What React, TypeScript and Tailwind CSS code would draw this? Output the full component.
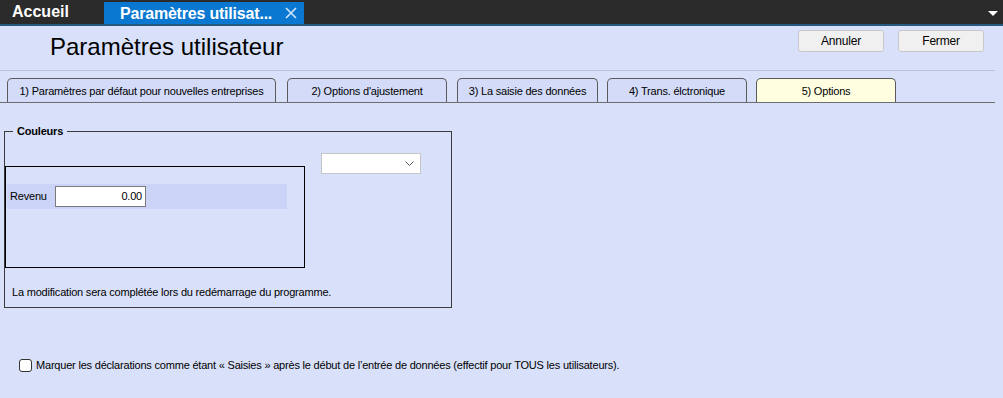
import React from "react";

const tabs = [
  { label: "1) Paramètres par défaut pour nouvelles entreprises", w: "w-[269px]", ml: "ml-[7px]" },
  { label: "2) Options d'ajustement", w: "w-[160px]", ml: "ml-[11px]" },
  { label: "3) La saisie des données", w: "w-[141px]", ml: "ml-[10px]" },
  { label: "4) Trans. élctronique", w: "w-[140px]", ml: "ml-[9px]" },
  { label: "5) Options", w: "w-[140px]", ml: "ml-[9px]", active: true },
];

export default function App() {
  return (
    <div className="w-[1003px] h-[398px] overflow-hidden bg-[#d9e0fa] text-black font-['Liberation_Sans',Arial,sans-serif]">
      {/* title bar */}
      <div className="h-[24px] bg-[#2b2b2b] flex items-end">
        <div className="w-[104px] h-[24px] pl-[12px] flex items-center text-white font-bold text-[16px] leading-none">
          Accueil
        </div>
        <div className="w-[200px] h-[22px] bg-[#0a78d0] flex items-center pl-[16px] pr-[6px] text-white font-bold text-[16px] leading-none tracking-[-0.2px]">
          <span className="flex-1 pt-[1px]">Paramètres utilisat...</span>
          <svg width="12" height="12" viewBox="0 0 12 12" className="mr-[1px]">
            <path d="M1 1 L11 11 M11 1 L1 11" stroke="#cfe6fa" strokeWidth="1.6" />
          </svg>
        </div>
        <div className="flex-1" />
        <svg width="12" height="8" viewBox="0 0 12 8" className="mb-[6px] mr-[4px]">
          <path d="M1 1 L11 1 L6 6 Z" fill="#ffffff" />
        </svg>
      </div>
      <div className="h-[2px] bg-[#27587d]" />

      {/* header */}
      <div className="h-[44px] flex items-start justify-between">
        <h1 className="pl-[50px] pt-[7px] text-[24px] leading-[28px] font-normal">Paramètres utilisateur</h1>
        <div className="flex gap-[14px] pt-[4px] pr-[19px]">
          <button className="w-[86px] h-[22px] bg-[#f0f0f0] border border-[#c8c8cc] rounded-[3px] text-[12px] leading-none tracking-[-0.2px]">
            Annuler
          </button>
          <button className="w-[86px] h-[22px] bg-[#f0f0f0] border border-[#c8c8cc] rounded-[3px] text-[12px] leading-none tracking-[-0.2px]">
            Fermer
          </button>
        </div>
      </div>
      <div className="h-px bg-[#bcc0d2] mr-[8px]" />

      {/* tabs */}
      <div className="pt-[7px] mr-[8px] flex items-end border-b border-[#6e6e6e]">
        {tabs.map((t) => (
          <div
            key={t.label}
            className={`${t.w} ${t.ml} h-[24px] border border-b-0 border-[#5a5a5a] rounded-t-[5px] flex items-center justify-center pt-[1px] text-[11px] leading-none tracking-[-0.2px] ${
              t.active ? "bg-[#fffee0]" : "bg-[#d3dbf8]"
            }`}
          >
            {t.label}
          </div>
        ))}
      </div>

      {/* Couleurs group */}
      <fieldset className="ml-[4px] mt-[22px] w-[448px] border border-[#3a3a3a] pb-[8px] text-[11px] tracking-[-0.2px]">
        <legend className="ml-[8px] px-[4px] font-bold leading-[13px]">Couleurs</legend>
        <div className="flex items-start">
          <div className="w-[300px] h-[102px] mt-[28px] border border-black">
            <div className="ml-[1px] mt-[17px] w-[280px] h-[25px] bg-[#cbd4f6] flex items-center pl-[3px]">
              <span className="w-[45px]">Revenu</span>
              <div className="w-[91px] h-[21px] bg-white border border-[#7a7a7a] flex items-center justify-end pr-[3px]">
                0.00
              </div>
            </div>
          </div>
          <div className="ml-[16px] mt-[15px] w-[100px] h-[21px] bg-white border border-[#c6c6c6] flex items-center justify-end pr-[6px]">
            <svg width="9" height="6" viewBox="0 0 9 6">
              <path d="M0.5 0.5 L4.5 4.5 L8.5 0.5" stroke="#555" fill="none" strokeWidth="1" />
            </svg>
          </div>
        </div>
        <p className="pl-[7px] mt-[18px] leading-[13px]">
          La modification sera complétée lors du redémarrage du programme.
        </p>
      </fieldset>

      {/* checkbox */}
      <label className="flex items-center ml-[19px] mt-[51px] gap-[4px] text-[11px] leading-[13px] tracking-[-0.2px]">
        <span className="w-[13px] h-[13px] bg-white border border-[#333] rounded-[3px]" />
        <span>
          Marquer les déclarations comme étant « Saisies » après le début de l’entrée de données (effectif pour TOUS les utilisateurs).
        </span>
      </label>
    </div>
  );
}
